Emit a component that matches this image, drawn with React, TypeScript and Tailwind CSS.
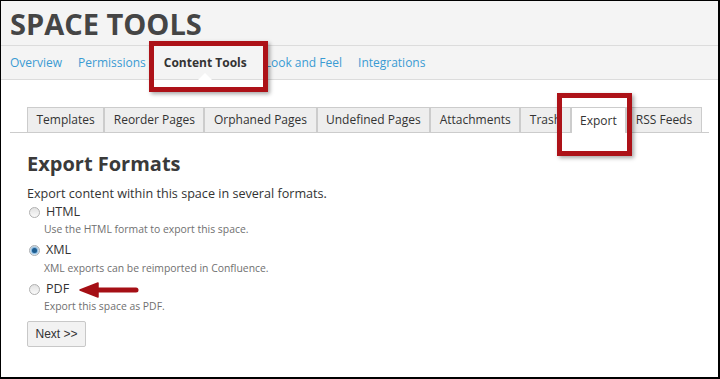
import React from 'react';

const tabs = ['Templates', 'Reorder Pages', 'Orphaned Pages', 'Undefined Pages', 'Attachments', 'Trash', 'Export', 'RSS Feeds'];
const navItems = ['Overview', 'Permissions', 'Content Tools', 'Look and Feel', 'Integrations'];

const formats = [
  { label: 'HTML', hint: 'Use the HTML format to export this space.', checked: false },
  { label: 'XML', hint: 'XML exports can be reimported in Confluence.', checked: true },
  { label: 'PDF', hint: 'Export this space as PDF.', checked: false },
];

function Radio({ checked }: { checked: boolean }) {
  return (
    <span className="flex h-[11px] w-[11px] items-center justify-center rounded-full border border-[#b0b0b0] bg-gradient-to-b from-[#e2e2e2] to-[#fafafa]">
      {checked && <span className="h-[5px] w-[5px] rounded-full bg-[#1d5c8f] shadow-[0_0_2px_1px_#5aa0d8]" />}
    </span>
  );
}

export default function App() {
  return (
    <div className="relative h-[379px] w-[720px] overflow-hidden bg-white font-['Open_Sans',sans-serif]">
      <div className="flex h-full w-full flex-col border-t border-l border-r-2 border-b-2 border-black">
        <div className="flex h-[45px] items-center border-b border-[#dcdcdc] bg-[#f4f4f4] pl-[9px]">
          <h1 className="text-[29px] font-bold leading-none text-[#454545]">SPACE TOOLS</h1>
        </div>
        <nav className="flex h-[34px] items-center gap-[16px] border-b border-[#dcdcdc] bg-[#f4f4f4] pl-[9px] text-[12px]">
          {navItems.map((item) => (
            <span
              key={item}
              className={
                item === 'Content Tools'
                  ? 'relative mx-[2px] flex h-full items-center font-bold text-[#333]'
                  : 'text-[#3a9bd3]'
              }
            >
              {item}
              {item === 'Content Tools' && (
                <span className="absolute bottom-[-1px] left-1/2 h-0 w-0 -translate-x-1/2 border-x-[7px] border-b-[7px] border-x-transparent border-b-white" />
              )}
            </span>
          ))}
        </nav>

        <div className="px-[9px] pt-[27px]">
          <div className="flex border-b border-[#cccccc] pl-[17px] text-[12px] whitespace-nowrap text-[#333]">
            {tabs.map((t) => (
              <div
                key={t}
                className={
                  t === 'Export'
                    ? '-mb-px flex h-[26px] items-center border border-b-0 border-[#cccccc] bg-white px-[8.5px]'
                    : 'flex h-[25px] items-center border border-b-0 border-[#cccccc] bg-[#eeeeee] px-[8.5px]'
                }
              >
                {t}
              </div>
            ))}
          </div>

          <div className="pl-[17px] pt-[17px] text-[#333]">
            <h2 className="text-[20px] font-bold leading-[28px] text-[#3a3a3a]">Export Formats</h2>
            <p className="mt-[7px] text-[12.6px] leading-[18px]">Export content within this space in several formats.</p>
            <div className="flex flex-col">
              {formats.map((f) => (
                <div key={f.label} className="mb-[4.5px]">
                  <div className="flex h-[18px] items-center gap-[6px] pl-[2px]">
                    <Radio checked={f.checked} />
                    <span className="text-[12.6px]">{f.label}</span>
                  </div>
                  <div className="pl-[17px] text-[10.4px] leading-[16px] text-[#707070]">{f.hint}</div>
                </div>
              ))}
            </div>
            <button className="mt-[2px] h-[26px] w-[59px] rounded-[2px] border border-[#c8c8c8] bg-[#f2f2f2] font-['Liberation_Sans',sans-serif] text-[12px] text-[#333]">
              Next &gt;&gt;
            </button>
          </div>
        </div>
      </div>

      {/* annotations */}
      <div className="absolute left-[149px] top-[41px] h-[51px] w-[119px] border-[5px] border-[#ad1218] shadow-[2px_2px_4px_rgba(0,0,0,0.35)]" />
      <div className="absolute left-[557px] top-[93px] h-[63px] w-[75px] border-[5px] border-[#ad1218] shadow-[2px_2px_4px_rgba(0,0,0,0.35)]" />
      <svg className="absolute left-[78px] top-[281px]" width="64" height="18" viewBox="0 0 64 18">
        <path d="M18 9 L58 9" stroke="#a50f15" strokeWidth="5" strokeLinecap="round" />
        <path d="M2 9 L20 2 L20 16 Z" fill="#a50f15" stroke="#a50f15" strokeWidth="1.5" strokeLinejoin="round" />
      </svg>
    </div>
  );
}
